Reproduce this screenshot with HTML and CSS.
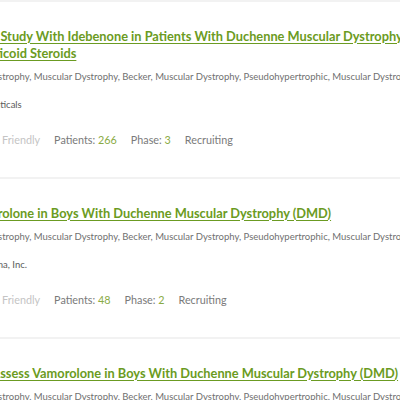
FILE: index.html
```html
<!DOCTYPE html>
<html lang="en">
<head>
<meta charset="utf-8">
<title>Trials</title>
<link rel="stylesheet" href="styles.css">
</head>
<body>
<div class="list">
  <article class="trial">
    <h3 class="title"><a href="#">A Phase 3 Double-Blind Study With Idebenone in Patients With Duchenne Muscular Dystrophy (DMD) Taking Glucocorticoid Steroids</a></h3>
    <dl class="info">
      <dt>Conditions</dt>
      <dd class="cond">Becker Muscular Dystrophy, Muscular Dystrophy, Becker, Muscular Dystrophy, Pseudohypertrophic, Muscular Dystrophy, Duchenne</dd>
      <dt>Sponsor</dt>
      <dd class="sponsor">Santhera Pharmaceuticals</dd>
    </dl>
    <div class="meta">
      <span class="age">Ages 10-18 Years</span>
      <span class="off">Patient Friendly</span>
      <span>Patients: <b>266</b></span>
      <span>Phase: <b>3</b></span>
      <span>Recruiting</span>
    </div>
  </article>
  <article class="trial">
    <h3 class="title"><a href="#">A Study to Assess Vamorolone in Boys With Duchenne Muscular Dystrophy (DMD)</a></h3>
    <dl class="info">
      <dt>Conditions</dt>
      <dd class="cond">Becker Muscular Dystrophy, Muscular Dystrophy, Becker, Muscular Dystrophy, Pseudohypertrophic, Muscular Dystrophy, Duchenne</dd>
      <dt>Sponsor</dt>
      <dd class="sponsor">ReveraGen BioPharma, Inc.</dd>
    </dl>
    <div class="meta">
      <span class="age">Ages 4-7 Years</span>
      <span class="off">Patient Friendly</span>
      <span>Patients: <b>48</b></span>
      <span>Phase: <b>2</b></span>
      <span>Recruiting</span>
    </div>
  </article>
  <article class="trial">
    <h3 class="title"><a href="#">An Extension Study to Assess Vamorolone in Boys With Duchenne Muscular Dystrophy (DMD)</a></h3>
    <dl class="info">
      <dt>Conditions</dt>
      <dd class="cond">Becker Muscular Dystrophy, Muscular Dystrophy, Becker, Muscular Dystrophy, Pseudohypertrophic, Muscular Dystrophy, Duchenne</dd>
      <dt>Sponsor</dt>
      <dd class="sponsor">ReveraGen BioPharma, Inc.</dd>
    </dl>
    <div class="meta">
      <span class="age">Ages 4-8 Years</span>
      <span class="off">Patient Friendly</span>
      <span>Patients: <b>48</b></span>
      <span>Phase: <b>2</b></span>
      <span>Recruiting</span>
    </div>
  </article>
</div>
</body>
</html>
```
FILE: styles.css
```css
html, body {
  margin: 0;
  padding: 0;
  background: #fff;
  overflow: hidden;
}
body {
  font-family: Lato, "Open Sans", sans-serif;
  color: #666;
}
.list {
  width: 565px;
  margin-left: -137.5px;
  border-top: 2px solid #f2f2f2;
}
.trial {
  padding: 25.5px 0 31.5px;
  border-bottom: 2px solid #f2f2f2;
}
.title {
  margin: 0;
  font-size: 12.8px;
  line-height: 17px;
  font-weight: 700;
}
.title a {
  color: #6b9b22;
  text-decoration: underline;
  text-decoration-thickness: 1px;
  text-underline-offset: 2px;
}
.info {
  display: grid;
  grid-template-columns: 52px 1fr;
  row-gap: 16px;
  margin: 9px 0 0;
  font-size: 9.5px;
  line-height: 12px;
}
.info dt {
  margin: 0;
  color: #999;
}
.info dd {
  margin: 0;
  min-width: 0;
}
.cond {
  color: #707070;
  white-space: nowrap;
  overflow: hidden;
}
.sponsor {
  color: #5a5a5a;
}
.meta {
  display: flex;
  gap: 14px;
  margin-top: 22px;
  font-size: 10.8px;
  line-height: 13px;
  color: #7a7a7a;
  white-space: nowrap;
}
.meta .age {
  flex: none;
  width: 89px;
}
.meta .off {
  color: #c4c4c4;
}
.meta b {
  font-weight: 400;
  color: #8aab45;
}
```
